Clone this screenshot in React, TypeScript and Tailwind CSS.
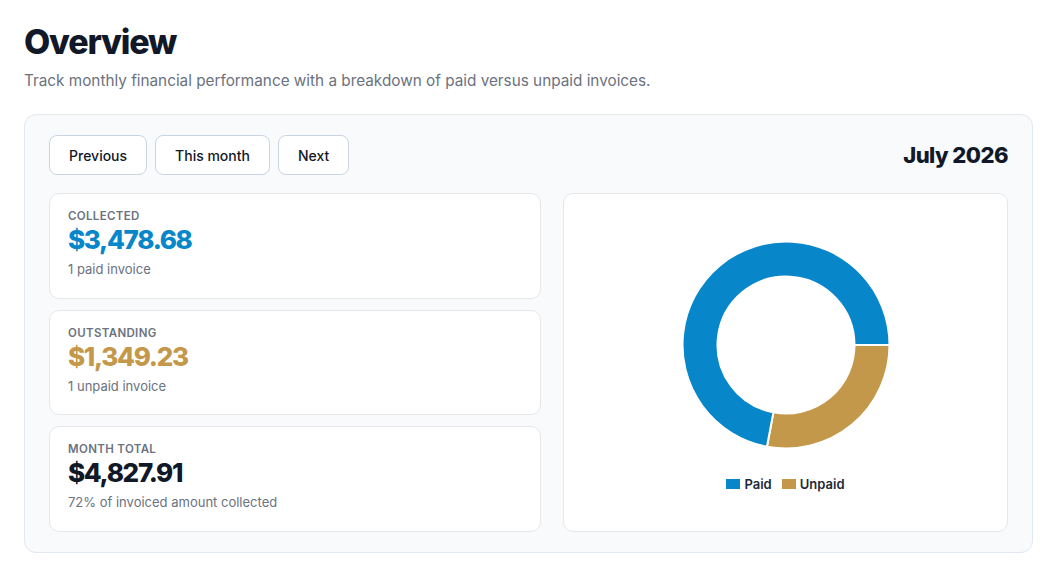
import React from "react";

const PAID = 3478.68;
const UNPAID = 1349.23;

const CX = 105;
const CY = 105;
const R_OUT = 103.5;
const R_IN = 68.5;

function pt(r: number, a: number) {
  return `${(CX + r * Math.cos(a)).toFixed(2)} ${(CY + r * Math.sin(a)).toFixed(2)}`;
}

function arc(a0: number, a1: number) {
  const large = a1 - a0 > Math.PI ? 1 : 0;
  return `M ${pt(R_OUT, a0)} A ${R_OUT} ${R_OUT} 0 ${large} 1 ${pt(R_OUT, a1)} L ${pt(R_IN, a1)} A ${R_IN} ${R_IN} 0 ${large} 0 ${pt(R_IN, a0)} Z`;
}

function Donut() {
  const total = PAID + UNPAID;
  const split = (UNPAID / total) * Math.PI * 2;
  return (
    <svg width="210" height="210" viewBox="0 0 210 210">
      <path d={arc(0, split)} fill="#c4984a" stroke="#ffffff" strokeWidth="2" />
      <path d={arc(split, Math.PI * 2)} fill="#0786c9" stroke="#ffffff" strokeWidth="2" />
    </svg>
  );
}

interface StatProps {
  label: string;
  value: string;
  note: string;
  color: string;
}

function StatCard({ label, value, note, color }: StatProps) {
  return (
    <div className="flex-1 rounded-[10px] border border-[#e5e7eb] bg-white px-[18px] pt-[14px]">
      <div className="text-[11.5px] font-semibold leading-4 tracking-[0.03em] text-[#6b7280]">{label}</div>
      <div className={`text-[26px] font-extrabold leading-8 tracking-[-0.05em] ${color}`}>{value}</div>
      <div className="mt-[4px] text-[13px] leading-[18px] text-[#6b7280]">{note}</div>
    </div>
  );
}

const buttons = ["Previous", "This month", "Next"];

export default function App() {
  return (
    <div className="min-h-screen bg-white px-6 pt-[22px] font-['Inter',sans-serif] text-[#111827]">
      <h1 className="text-[34px] font-extrabold leading-[40px] tracking-[-0.035em] text-[#111827]">Overview</h1>
      <p className="mt-[7px] text-[15.3px] leading-6 text-[#6b7280]">
        Track monthly financial performance with a breakdown of paid versus unpaid invoices.
      </p>

      <div className="mt-[21px] w-[1009px] rounded-xl border border-[#e2e8f0] bg-[#f8fafc] px-6 pb-5 pt-5">
        <div className="flex h-10 items-center justify-between">
          <div className="flex gap-2">
            {buttons.map((b) => (
              <button
                key={b}
                type="button"
                className="h-10 rounded-lg border border-[#cbd5e1] bg-white px-[19px] text-[14px] font-medium text-[#111827]"
              >
                {b}
              </button>
            ))}
          </div>
          <div className="text-[22px] font-extrabold tracking-[-0.025em] text-[#111827]">July 2026</div>
        </div>

        <div className="mt-[18px] grid h-[339px] grid-cols-[492px_1fr] gap-[22px]">
          <div className="flex flex-col gap-[11px]">
            <StatCard label="COLLECTED" value="$3,478.68" note="1 paid invoice" color="text-[#0786c9]" />
            <StatCard label="OUTSTANDING" value="$1,349.23" note="1 unpaid invoice" color="text-[#c4984a]" />
            <StatCard
              label="MONTH TOTAL"
              value="$4,827.91"
              note="72% of invoiced amount collected"
              color="text-[#111827]"
            />
          </div>

          <div className="flex flex-col items-center rounded-[10px] border border-[#e5e7eb] bg-white pt-[46px]">
            <Donut />
            <div className="mt-[26px] flex items-center gap-[10px] text-[13px] font-semibold leading-4 text-[#1f2937]">
              <div className="flex items-center gap-[4px]">
                <span className="h-[10px] w-[14px] bg-[#0786c9]" />
                Paid
              </div>
              <div className="flex items-center gap-[4px]">
                <span className="h-[10px] w-[14px] bg-[#c4984a]" />
                Unpaid
              </div>
            </div>
          </div>
        </div>
      </div>
    </div>
  );
}
